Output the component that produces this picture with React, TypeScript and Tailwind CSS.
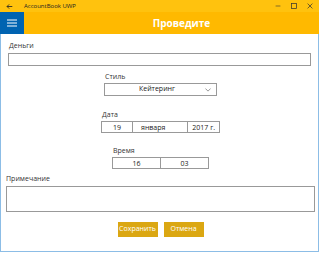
import React from 'react';

const font = { fontFamily: '"Open Sans", "Noto Sans", sans-serif' };

const Label = ({ children, className = '' }: { children: React.ReactNode; className?: string }) => (
  <div className={`text-[7px] leading-[8px] text-[#333] ${className}`}>{children}</div>
);

export default function App() {
  return (
    <div className="w-[321px] h-[253px] bg-white" style={font}>
      <div className="w-[319px] h-[252px] flex flex-col border-x border-b border-[#8cbde6]">
        {/* title bar */}
        <div className="h-[12px] bg-[#ffc20e] flex items-center text-[#222] -mx-px">
          <svg className="ml-[6px] w-[7px] h-[7px]" viewBox="0 0 10 10" fill="none" stroke="#222" strokeWidth="1.2">
            <path d="M9 5H1.5M4.5 2L1.5 5l3 3" />
          </svg>
          <span className="ml-[11px] text-[6px] leading-none">AccountBook UWP</span>
          <div className="ml-auto flex items-center gap-[10px] mr-[6px]">
            <svg className="w-[6px] h-[6px]" viewBox="0 0 10 10" stroke="#333" strokeWidth="1">
              <path d="M1 5h8" />
            </svg>
            <svg className="w-[6px] h-[6px]" viewBox="0 0 10 10" fill="none" stroke="#333" strokeWidth="1.2">
              <rect x="1" y="1" width="8" height="8" />
            </svg>
            <svg className="w-[6px] h-[6px]" viewBox="0 0 10 10" stroke="#333" strokeWidth="1.2">
              <path d="M1 1l8 8M9 1l-8 8" />
            </svg>
          </div>
        </div>
        {/* header */}
        <div className="h-[22px] bg-[#ffb900] flex items-center -mx-px">
          <div className="w-[24px] h-full bg-[#0063b1] flex items-center justify-center">
            <svg className="w-[10px] h-[8px]" viewBox="0 0 10 8" stroke="white" strokeWidth="1">
              <path d="M0 1h10M0 4h10M0 7h10" />
            </svg>
          </div>
          <div className="flex-1 text-center pl-[20px] text-white font-bold text-[10px] leading-none">Проведите</div>
        </div>

        {/* form */}
        <div className="flex flex-col px-[7px]">
          <Label className="mt-[8px] pl-px">Деньги</Label>
          <div className="mt-[3px] h-[13px] border border-[#999]" />

          <div className="flex flex-col mt-[7px] ml-[96px] w-[113px]">
            <Label className="pl-px">Стиль</Label>
            <div className="mt-[2px] h-[13px] border border-[#999] flex items-center text-[7px] text-[#222]">
              <span className="flex-1 text-center pl-[4px]">Кейтеринг</span>
              <svg className="w-[6px] h-[4px] mr-[5px]" viewBox="0 0 8 5" fill="none" stroke="#666" strokeWidth="0.9">
                <path d="M0.5 0.5L4 4l3.5-3.5" />
              </svg>
            </div>
          </div>

          <div className="flex flex-col mt-[15px] ml-[93px] w-[119px]">
            <Label className="pl-px">Дата</Label>
            <div className="mt-[2px] h-[12px] border border-[#999] flex text-[7px] leading-none text-[#222]">
              <div className="w-[31px] border-r border-[#999] flex items-center justify-center">19</div>
              <div className="w-[55px] border-r border-[#999] flex items-center pl-[8px]">января</div>
              <div className="flex-1 flex items-center justify-end pr-[4px]">2017 г.</div>
            </div>
          </div>

          <div className="flex flex-col mt-[14px] ml-[104px] w-[97px]">
            <Label className="pl-px">Время</Label>
            <div className="mt-[2px] h-[12px] border border-[#999] flex text-[7px] leading-none text-[#222]">
              <div className="w-[48px] border-r border-[#999] flex items-center justify-center">16</div>
              <div className="flex-1 flex items-center justify-center">03</div>
            </div>
          </div>

          <Label className="mt-[6px] -ml-[2px]">Примечание</Label>
          <div className="mt-[3px] -ml-[2px] -mr-[4px] h-[26px] border border-[#999]" />

          <div className="flex justify-center gap-[6px] mt-[10px] pl-[2px]">
            <div className="w-[40px] h-[15px] bg-[#dba712] text-white text-[7px] flex items-center justify-center">Сохранить</div>
            <div className="w-[40px] h-[15px] bg-[#dba712] text-white text-[7px] flex items-center justify-center">Отмена</div>
          </div>
        </div>
      </div>
    </div>
  );
}
